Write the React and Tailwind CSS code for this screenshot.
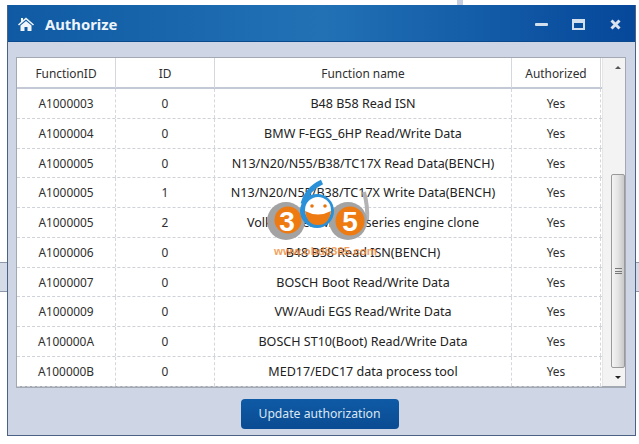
const rows = [
  ["A1000003", "0", "B48 B58 Read ISN"],
  ["A1000004", "0", "BMW F-EGS_6HP Read/Write Data"],
  ["A1000005", "0", "N13/N20/N55/B38/TC17X Read Data(BENCH)"],
  ["A1000005", "1", "N13/N20/N55/B38/TC17X Write Data(BENCH)"],
  ["A1000005", "2", "Volkswagen MED17 series engine clone"],
  ["A1000006", "0", "B48 B58 Read ISN(BENCH)"],
  ["A1000007", "0", "BOSCH Boot Read/Write Data"],
  ["A1000009", "0", "VW/Audi EGS Read/Write Data"],
  ["A100000A", "0", "BOSCH ST10(Boot) Read/Write Data"],
  ["A100000B", "0", "MED17/EDC17 data process tool"],
];

const cols = "grid grid-cols-[99px_99px_297px_89px]";

function Logo() {
  return (
    <svg className="absolute left-[262px] top-[176px]" width="116" height="90" viewBox="0 0 116 90">
      <circle cx="24" cy="45" r="19" fill="#a3a3a3" />
      <circle cx="26" cy="44" r="13.5" fill="#ee7a12" />
      <path d="M105 44 Q106 30 102 16" fill="none" stroke="#b3b3b3" strokeWidth="4" />
      <circle cx="86" cy="45" r="19" fill="#a3a3a3" />
      <circle cx="88" cy="45" r="14.5" fill="#ee7a12" />
      <text x="25" y="55" textAnchor="middle" fontFamily="'Liberation Sans', sans-serif" fontWeight="700" fontSize="28" fill="#ffffff">3</text>
      <text x="88" y="55" textAnchor="middle" fontFamily="'Liberation Sans', sans-serif" fontWeight="700" fontSize="28" fill="#ffffff">5</text>
      <circle cx="55" cy="35" r="17" fill="#2a90d8" />
      <path d="M41 28 Q45 13 60 6" fill="none" stroke="#2a90d8" strokeWidth="5" />
      <circle cx="56" cy="34" r="13" fill="#ffffff" />
      <circle cx="50" cy="30" r="1.8" fill="#e8760f" />
      <circle cx="63" cy="30" r="1.8" fill="#e8760f" />
      <path d="M43 35 Q56 42 69 35 Q67 49 56 49 Q45 49 43 35 Z" fill="#ee7a12" />
      <text x="12" y="79" fontFamily="'Liberation Sans', sans-serif" fontWeight="700" fontSize="11.5" fill="#ef8f3f" fillOpacity="0.85">www.obdii365.com</text>
    </svg>
  );
}

export default function App() {
  return (
    <div className="relative w-[639px] h-[444px] overflow-hidden bg-white pt-[5px] pl-[7px] font-['Noto_Sans',sans-serif]">
      <div className="absolute left-0 top-[262px] w-[8px] h-[30px] bg-[#d5dce8] border-y border-[#8d98a8]" />
      <div className="absolute right-0 top-[262px] w-[4px] h-[30px] bg-[#d5dce8] border-y border-[#8d98a8]" />
      <div className="absolute left-[457px] top-0 w-[6px] h-[6px] bg-[#c4cee0]" />

      <div className="relative w-[629px] h-[431px] flex flex-col border border-t-0 border-[#4c6284] bg-[#ced6e6]">
        <div className="h-[37px] shrink-0 flex items-center pt-[2px] bg-gradient-to-r from-[#0f5aa3] via-[#2271b5] to-[#06479a] border-b border-[#0a4a8c] text-white">
          <svg className="ml-[10px] mr-[11px]" width="16" height="14" viewBox="0 0 16 14" fill="#f2f6fa">
            <path d="M8 0.5 L16 7.4 L15 8.6 L8 2.6 L1 8.6 L0 7.4 L3 4.8 V1 H5 V3 Z" />
            <path d="M8 4 L13.5 8.6 V14 H9.5 V10 H6.5 V14 H2.5 V8.6 Z" />
          </svg>
          <span className="text-[14.8px] font-bold leading-none text-[#eef4fa]">Authorize</span>
          <div className="ml-auto flex items-center">
            <div className="w-[13px] h-[3px] bg-[#d3dfec] rounded-[1px]" />
            <div className="ml-[24px] w-[13px] h-[11px] border-2 border-t-[4px] border-[#d3dfec]" />
            <svg className="ml-[25px] mr-[14px]" width="11" height="11" viewBox="0 0 11 11">
              <path d="M1.5 1.5 L9.5 9.5 M9.5 1.5 L1.5 9.5" stroke="#dbe5f0" strokeWidth="3" />
            </svg>
          </div>
        </div>

        <div className="mt-[15px] ml-[8px] w-[610px] h-[331px] shrink-0 flex bg-white border-b-2 border-r-2 border-t border-l border-[#a3a9b2] text-[11.9px] text-[#2f2f2f]">
          <div className="w-[585px] shrink-0 flex flex-col">
            <div className={`${cols} h-[31px] border-b-2 border-[#c3c9d6] text-center leading-[30px]`}>
              <div className="border-r border-[#d4d7dc]">FunctionID</div>
              <div className="border-r border-[#d4d7dc]">ID</div>
              <div className="border-r border-[#d4d7dc]">Function name</div>
              <div className="border-r border-[#d4d7dc]">Authorized</div>
            </div>
            {rows.map((r, i) => (
              <div key={i} className={`${cols} h-[29.75px] border-b border-dashed border-[#cfd2d8] text-center leading-[29px]`}>
                <div className="border-r border-dashed border-[#d4d7dc]">{r[0]}</div>
                <div className="border-r border-dashed border-[#d4d7dc]">{r[1]}</div>
                <div className="border-r border-dashed border-[#d4d7dc] text-[12.55px] text-[#222]">{r[2]}</div>
                <div className="border-r border-dashed border-[#d4d7dc]">Yes</div>
              </div>
            ))}
          </div>
          <div className="flex-1 flex flex-col bg-[#f3f3f3] border-l border-[#e6e6e6] pl-[8px]">
            <div className="h-[17px] w-[14px] flex items-center justify-center mt-[1px]">
              <div className="w-0 h-0 border-x-[3px] border-x-transparent border-b-[3px] border-b-[#555]" />
            </div>
            <div className="mt-[98px] h-[194px] w-[14px] flex items-center justify-center rounded-[2px] border border-[#9a9a9a] bg-gradient-to-r from-[#f4f4f4] via-[#e4e4e4] to-[#c9c9c9]">
              <div className="w-[7px] h-[6px] border-y border-[#777] flex items-center"><div className="w-full h-px bg-[#777]" /></div>
            </div>
            <div className="h-[18px] w-[14px] flex items-center justify-center">
              <div className="w-0 h-0 border-x-[3px] border-x-transparent border-t-[3px] border-t-[#222]" />
            </div>
          </div>
        </div>

        <div className="flex-1 flex items-center justify-center pr-[4px] pt-[5px]">
          <button className="w-[158px] h-[30px] rounded-[4px] bg-gradient-to-b from-[#0f5aa6] to-[#0a4b92] text-[#dbe7f3] text-[12.2px] leading-none">Update authorization</button>
        </div>
      </div>

      <Logo />
    </div>
  );
}
